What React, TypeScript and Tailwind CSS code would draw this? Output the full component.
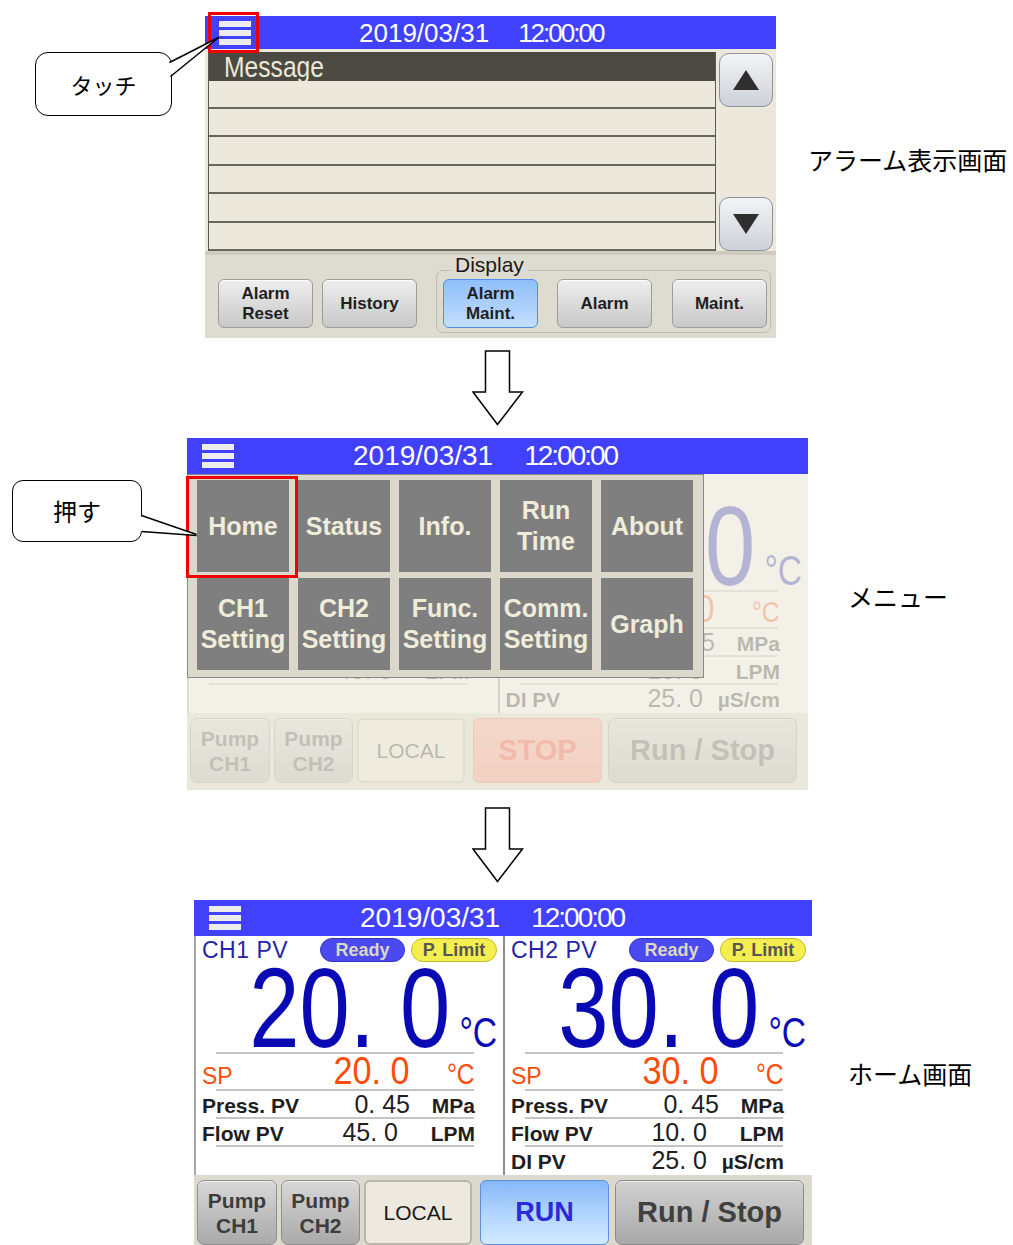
import React from "react";

// --- shared bits -----------------------------------------------------------

function Burger() {
  return (
    <div className="flex flex-col gap-[3px] w-[32px] shrink-0">
      <div className="h-[6px] bg-[#ececec]" />
      <div className="h-[6px] bg-[#ececec]" />
      <div className="h-[6px] bg-[#ececec]" />
    </div>
  );
}

function DownArrow() {
  return (
    <svg width="52" height="77" viewBox="0 0 52 77">
      <polygon
        points="13.5,1 37.5,1 37.5,42 50.5,42 25.5,74.5 1,42 13.5,42"
        fill="white"
        stroke="black"
        strokeWidth="1.5"
      />
    </svg>
  );
}

function Triangle({ down }: { down?: boolean }) {
  return (
    <svg width="26" height="20" viewBox="0 0 26 20">
      <polygon points={down ? "0,0 26,0 13,20" : "13,0 26,20 0,20"} fill="#2f2f2f" />
    </svg>
  );
}

// --- alarm screen ----------------------------------------------------------

const alarmBtn =
  "w-[95px] h-[49px] shrink-0 rounded-[6px] border border-[#9c9c9c] bg-gradient-to-b from-[#eeeeee] to-[#c8c8c8] shadow-[inset_0_1px_0_#ffffff] flex flex-col items-center justify-center text-[17px] font-bold leading-[20px] text-[#1f1f1f]";

const scrollBtn =
  "w-[54px] h-[54px] rounded-[10px] border border-[#8d9198] bg-gradient-to-b from-[#f3f4f6] to-[#cdd1d8] flex items-center justify-center";

function AlarmScreen() {
  const rows = ["h-[28px]", "h-[28px]", "h-[29px]", "h-[28px]", "h-[29px]", "h-[28px]"];
  return (
    <div className="relative w-[571px] h-[322px] shrink-0 flex flex-col">
      {/* header */}
      <div className="h-[33px] bg-[#4141fb] flex items-center pl-[14px]">
        <Burger />
        <div className="ml-[108px] flex text-white text-[26px] leading-none">
          <span>2019/03/31</span>
          <span className="ml-[29px] tracking-[-2px]">12:00:00</span>
        </div>
      </div>

      {/* message list */}
      <div className="h-[206px] bg-[#ece8dc] flex pt-[3px] pl-[3px] border-b-4 border-[#cfcbbf]">
        <div className="w-[508px] h-[199px] flex flex-col border-x border-[#5a5a55]">
          <div className="h-[29px] bg-[#4a4a42] pl-[15px] pt-[1px]">
            <span className="inline-block text-[29px] leading-[29px] text-[#ebe7d6] scale-x-[0.85] origin-left">
              Message
            </span>
          </div>
          {rows.map((h, i) => (
            <div key={i} className={h + " border-b-2 border-[#66665f]"} />
          ))}
        </div>
        <div className="ml-[3px] w-[54px] h-[199px] flex flex-col justify-between pt-[1px]">
          <div className={scrollBtn}>
            <Triangle />
          </div>
          <div className={scrollBtn}>
            <Triangle down />
          </div>
        </div>
      </div>

      {/* bottom buttons */}
      <div className="h-[83px] bg-[#dedbd0] flex items-start pt-[15px] pl-[13px]">
        <div className={alarmBtn + " mt-[9px]"}>
          <span>Alarm</span>
          <span>Reset</span>
        </div>
        <div className={alarmBtn + " mt-[9px] ml-[9px]"}>History</div>
        <div className="relative ml-[19px] w-[335px] h-[63px] rounded-[7px] border border-[#bfbcb1] flex pl-[6px] pt-[8px]">
          <span className="absolute -top-[14px] left-[14px] px-[4px] bg-[#dedbd0] text-[21px] leading-[16px] text-[#1a1a1a]">
            Display
          </span>
          <div className="w-[95px] h-[49px] shrink-0 rounded-[6px] border border-[#4f8de8] bg-gradient-to-b from-[#8fbff9] to-[#c3defd] flex flex-col items-center justify-center text-[17px] font-bold leading-[20px] text-[#1f1f1f]">
            <span>Alarm</span>
            <span>Maint.</span>
          </div>
          <div className={alarmBtn + " ml-[19px]"}>Alarm</div>
          <div className={alarmBtn + " ml-[20px]"}>Maint.</div>
        </div>
      </div>

      <div className="absolute left-[3px] -top-[4px] w-[51px] h-[41px] border-[3px] border-[#f20000]" />
    </div>
  );
}

// --- home screen -----------------------------------------------------------

function Line() {
  return <div className="ml-[20px] w-[258px] h-[2px] bg-[#c4c4c4]" />;
}

type Hide = "none" | "all" | "labels";

function Row({
  label,
  value,
  unit,
  shift,
  hideLabel,
  hideAll,
}: {
  label: string;
  value: string;
  unit: string;
  shift?: boolean;
  hideLabel?: boolean;
  hideAll?: boolean;
}) {
  return (
    <div
      className={
        hideAll
          ? "invisible h-[26px] leading-[26px] flex items-baseline pl-[6px] pr-[28px] text-[#1e1e1e] whitespace-nowrap"
          : "h-[26px] leading-[26px] flex items-baseline pl-[6px] pr-[28px] text-[#1e1e1e] whitespace-nowrap"
      }
    >
      <span className={hideLabel ? "invisible flex-1 text-[21px] font-bold" : "flex-1 text-[21px] font-bold"}>{label}</span>
      <span className={shift ? "text-[25px] mr-[12px]" : "text-[25px]"}>{value}</span>
      <span className="w-[65px] text-right text-[21px] font-bold">{unit}</span>
    </div>
  );
}

function Panel({
  ch,
  pvHead,
  pvTail,
  sp,
  flow,
  di,
  hide = "none",
}: {
  ch: string;
  pvHead: string;
  pvTail: string;
  sp: string;
  flow: string;
  di?: boolean;
  hide?: Hide;
}) {
  const all = hide === "all";
  const labels = hide !== "none";
  return (
    <div className="flex-1 min-w-0 flex flex-col">
      <div className={labels ? "invisible h-[28px] flex items-center pl-[6px] whitespace-nowrap" : "h-[28px] flex items-center pl-[6px] whitespace-nowrap"}>
        <span className="w-[118px] text-[23px] leading-none text-[#2424a8] tracking-[0.5px]">{ch} PV</span>
        <span className="w-[85px] h-[24px] rounded-full bg-[#4a4af0] border border-[#3434c4] text-center text-[18px] font-bold leading-[22px] text-[#dcd8c0]">
          Ready
        </span>
        <span className="ml-[6px] w-[86px] h-[24px] rounded-full bg-[#f4ee4e] border border-[#c4bc28] text-center text-[18px] font-bold leading-[22px] text-[#565656]">
          P. Limit
        </span>
      </div>
      <div className={all ? "invisible h-[88px] flex items-baseline justify-end pr-[6px] text-[#0a0ab4] whitespace-nowrap" : "h-[88px] flex items-baseline justify-end pr-[6px] text-[#0a0ab4] whitespace-nowrap"}>
        <span className="text-[113px] leading-[88px] scale-x-[0.8] origin-right whitespace-pre">
          <span className={labels ? "invisible" : ""}>{pvHead}</span>
          {pvTail}
        </span>
        <span className="text-[42px] leading-none scale-x-[0.8] origin-right">°C</span>
      </div>
      <Line />
      <div className={all ? "invisible h-[35px] leading-[35px] flex items-baseline pl-[6px] pr-[28px] text-[#ff4c0a] whitespace-nowrap" : "h-[35px] leading-[35px] flex items-baseline pl-[6px] pr-[28px] text-[#ff4c0a] whitespace-nowrap"}>
        <span className={labels ? "invisible flex-1 text-[23px]" : "flex-1 text-[23px]"}>SP</span>
        <span className="text-[38px] scale-x-[0.9] origin-right">{sp}</span>
        <span className="w-[65px] text-right text-[29px]">
          <span className="inline-block scale-x-[0.85] origin-right">°C</span>
        </span>
      </div>
      <Line />
      <Row label="Press. PV" value="0. 45" unit="MPa" hideLabel={labels} hideAll={all} />
      <Line />
      <Row label="Flow PV" value={flow} unit="LPM" shift hideLabel={labels} />
      <Line />
      {di && <Row label="DI PV" value="25. 0" unit="µS/cm" shift />}
    </div>
  );
}

function HomeScreen({ faded = false, wide = false }: { faded?: boolean; wide?: boolean }) {
  return (
    <div className={wide ? "w-[621px] h-[352px] shrink-0 flex flex-col" : "w-[618px] h-[352px] shrink-0 flex flex-col"}>
      <div className="h-[36px] bg-[#4141fb] flex items-center pl-[15px]">
        <Burger />
        <div className="ml-[119px] flex text-white text-[28px] leading-none">
          <span>2019/03/31</span>
          <span className="ml-[31px] tracking-[-2px]">12:00:00</span>
        </div>
      </div>
      <div className="relative flex-1 flex flex-col bg-[#dcd9ce]">
        <div className="h-[239px] flex bg-white border-l-2 border-[#a6a6a6]">
          <Panel ch="CH1" pvHead="20. " pvTail="0" sp="20. 0" flow="45. 0" hide={faded ? "all" : "none"} />
          <div className="w-[2px] bg-[#8c8c8c]" />
          <Panel ch="CH2" pvHead="30. " pvTail="0" sp="30. 0" flow="10. 0" di hide={faded ? "labels" : "none"} />
        </div>
        <div className="flex pt-[5px] pl-[3px]">
          <div className="w-[80px] h-[65px] rounded-[7px] border border-[#8e8e8e] bg-gradient-to-b from-[#d8d8d8] to-[#a9a9a9] shadow-[inset_0_1px_0_#eeeeee] flex flex-col items-center justify-center text-[21px] font-bold leading-[25px] text-[#3d3d3d]">
            <span>Pump</span>
            <span>CH1</span>
          </div>
          <div className="ml-[4px] w-[79px] h-[65px] rounded-[7px] border border-[#8e8e8e] bg-gradient-to-b from-[#d8d8d8] to-[#a9a9a9] shadow-[inset_0_1px_0_#eeeeee] flex flex-col items-center justify-center text-[21px] font-bold leading-[25px] text-[#3d3d3d]">
            <span>Pump</span>
            <span>CH2</span>
          </div>
          <div className="ml-[4px] w-[108px] h-[65px] rounded-[6px] border-2 border-[#b9b5aa] bg-[#ede9de] flex items-center justify-center text-[21px] text-[#1a1a1a]">
            LOCAL
          </div>
          {faded ? (
            <div className="ml-[8px] w-[129px] h-[65px] rounded-[6px] border border-[#e06050] bg-gradient-to-b from-[#ff9a8a] to-[#ff7e70] flex items-center justify-center text-[29px] font-bold text-[#ff2010]">
              STOP
            </div>
          ) : (
            <div className="ml-[8px] w-[129px] h-[65px] rounded-[6px] border border-[#5c8fe0] bg-gradient-to-b from-[#86b8f8] via-[#b0d4fe] to-[#d2eaff] flex items-center justify-center text-[27px] font-bold text-[#2b2bdc]">
              RUN
            </div>
          )}
          <div className="ml-[6px] w-[189px] h-[65px] rounded-[7px] border border-[#8a8a8a] bg-gradient-to-b from-[#d2d2d2] to-[#a8a8a8] shadow-[inset_0_1px_0_#eeeeee] flex items-center justify-center text-[29px] font-bold text-[#404040]">
            Run / Stop
          </div>
        </div>
        {faded && <div className="absolute inset-0 bg-[#efecdf]/75" />}
      </div>
    </div>
  );
}

// --- menu screen -----------------------------------------------------------

const tile =
  "h-[92px] bg-[#7f7f7f] flex flex-col items-center justify-center text-center text-[25px] font-bold leading-[31px] text-[#f0ecda] whitespace-nowrap";

function MenuScreen() {
  const items = [
    ["Home"],
    ["Status"],
    ["Info."],
    ["Run", "Time"],
    ["About"],
    ["CH1", "Setting"],
    ["CH2", "Setting"],
    ["Func.", "Setting"],
    ["Comm.", "Setting"],
    ["Graph"],
  ];
  return (
    <div className="relative shrink-0">
      <HomeScreen faded wide />
      <div className="absolute left-0 top-[36px] w-[517px] h-[204px] bg-[#dcd8cc] border border-[#8a8a8a] grid grid-cols-[repeat(5,92px)] gap-x-[9px] gap-y-[6px] pl-[9px] pt-[5px] content-start">
        {items.map((lines, i) => (
          <div key={i} className={tile}>
            {lines.map((l) => (
              <span key={l}>{l}</span>
            ))}
          </div>
        ))}
      </div>
      <div className="absolute -left-[1px] top-[38px] w-[112px] h-[102px] border-[3px] border-[#f20000]" />
    </div>
  );
}

// --- page ------------------------------------------------------------------

const jp = "font-['Noto_Sans_CJK_JP',sans-serif]";

export default function App() {
  return (
    <div className="w-[1013px] h-[1245px] overflow-hidden bg-white pt-[16px] text-black font-['Liberation_Sans',Arial,sans-serif]">
      {/* alarm screen row */}
      <div className="flex h-[322px]">
        <div className="w-[205px] shrink-0 pt-[36px] pl-[35px]">
          <div className="relative w-[137px] h-[64px] border-[1.5px] border-black rounded-[13px] bg-white flex items-center justify-center">
            <span className={jp + " text-[22px]"}>タッチ</span>
            <svg className="absolute left-[133px] -top-[17px] z-10 overflow-visible" width="52" height="45" viewBox="0 0 52 45">
              <polygon points="0,26.5 49.5,1.5 0,40.5" fill="white" />
              <line x1="0.5" y1="26.5" x2="49.5" y2="1.5" stroke="black" strokeWidth="1.5" />
              <line x1="1.5" y1="40.5" x2="49.5" y2="1.5" stroke="black" strokeWidth="1.5" />
            </svg>
          </div>
        </div>
        <AlarmScreen />
        <div className={jp + " ml-[32px] mt-[128px] shrink-0 whitespace-nowrap text-[25px] leading-[30px]"}>
          アラーム表示画面
        </div>
      </div>

      <div className="h-[100px] pt-[12px] pl-[472px]">
        <DownArrow />
      </div>

      {/* menu row */}
      <div className="flex h-[352px]">
        <div className="w-[187px] shrink-0 pt-[42px] pl-[12px]">
          <div className="relative w-[130px] h-[62px] border-[1.5px] border-black rounded-[11px] bg-white flex items-center justify-center">
            <span className={jp + " text-[24px]"}>押す</span>
            <svg className="absolute left-[126px] top-[28px] z-10 overflow-visible" width="60" height="30" viewBox="0 0 60 30">
              <polygon points="0,6.5 57.5,25.5 57.5,26.5 0,22.5" fill="white" />
              <line x1="2.5" y1="6.5" x2="57.5" y2="25.5" stroke="black" strokeWidth="1.5" />
              <line x1="2.5" y1="22.5" x2="57.5" y2="26.5" stroke="black" strokeWidth="1.5" />
            </svg>
          </div>
        </div>
        <MenuScreen />
        <div className={jp + " ml-[40px] mt-[143px] shrink-0 whitespace-nowrap text-[25px] leading-[30px]"}>メニュー</div>
      </div>

      <div className="h-[110px] pt-[17px] pl-[472px]">
        <DownArrow />
      </div>

      {/* home row */}
      <div className="flex h-[352px]">
        <div className="w-[194px] shrink-0" />
        <HomeScreen />
        <div className={jp + " ml-[36px] mt-[158px] shrink-0 whitespace-nowrap text-[25px] leading-[30px]"}>ホーム画面</div>
      </div>
    </div>
  );
}
